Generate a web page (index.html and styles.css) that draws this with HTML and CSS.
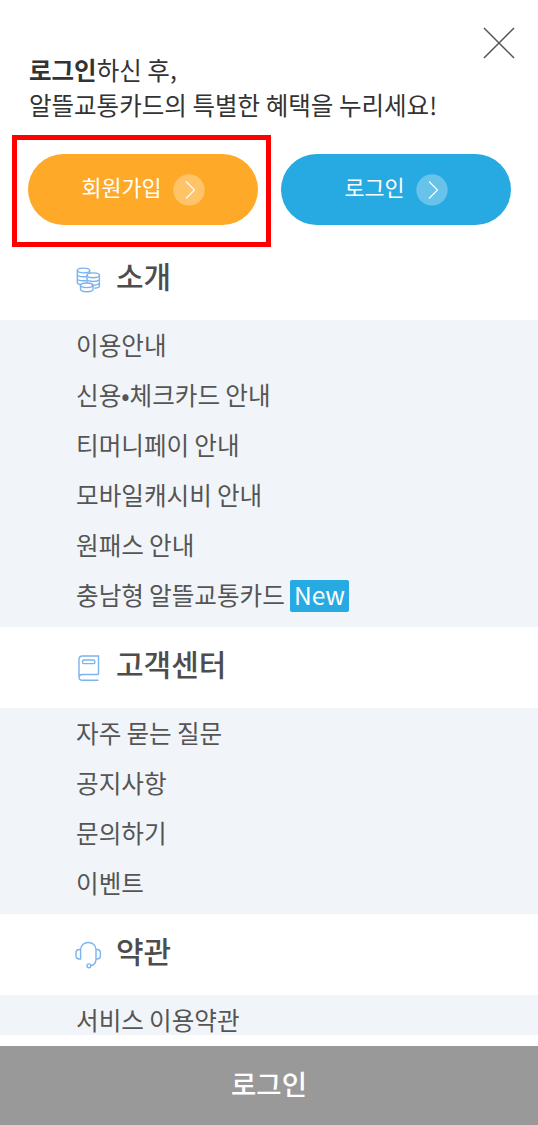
FILE: index.html
```
<!DOCTYPE html>
<html lang="ko">
<head>
    <meta charset="UTF-8">
    <meta name="viewport" content="width=device-width, initial-scale=1.0">
    <title>알뜰교통카드</title>
    <link rel="stylesheet" href="styles.css">
</head>
<body>
    <header class="header">
        <p class="intro"><strong>로그인</strong>하신 후,<br>알뜰교통카드의 특별한 혜택을 누리세요!</p>
        <a class="close">
            <svg width="32" height="32" viewBox="0 0 32 32"><path d="M1 1l30 30M31 1L1 31"/></svg>
        </a>
    </header>
    <div class="member">
        <div class="member-item focus">
            <a class="btn btn-join">
                <span>회원가입</span>
                <svg class="arrow" width="32" height="32" viewBox="0 0 32 32"><circle cx="16" cy="16" r="15.7"/><path d="M13 7.5l8.5 8.5-8.5 8.5"/></svg>
            </a>
        </div>
        <div class="member-item">
            <a class="btn btn-login">
                <span>로그인</span>
                <svg class="arrow" width="32" height="32" viewBox="0 0 32 32"><circle cx="16" cy="16" r="15.7"/><path d="M13 7.5l8.5 8.5-8.5 8.5"/></svg>
            </a>
        </div>
    </div>
    <nav class="menu">
        <h2 class="menu-title menu-title--first">
            <svg class="icon" width="28" height="28" viewBox="0 0 28 28">
                <!-- 동전 -->
                <ellipse cx="9.5" cy="4.500" rx="6.200" ry="2.400"/>
                <path d="M3.300 4.500v12c0 1.200 1.500 2 3.700 2.200M15.700 4.500v3M3.300 8.500c0 1.400 2.700 2.300 6.200 2.300 1.200 0 2.300-.1 3.200-.3M3.300 12.500c0 1.400 2.700 2.300 6.200 2.300h3"/>
                <ellipse cx="19.200" cy="9.300" rx="6.200" ry="2.400"/>
                <path d="M13 9.300V17M25.400 9.300V20c0 1.200-2 2-5 2.200M13 13c0 1.400 2.700 2.400 6.200 2.400s6.200-1 6.200-2.400M17.500 19.200c4.500.2 7.900-.8 7.900-2.400"/>
                <ellipse cx="12.800" cy="19.300" rx="6.300" ry="2.300"/>
                <path d="M6.500 19.300v4c0 1.400 2.800 2.400 6.300 2.400s6.300-1 6.300-2.400v-4"/>
            </svg>
            <span>소개</span>
        </h2>
        <ul class="menu-list">
            <li>이용안내</li>
            <li>신용•체크카드 안내</li>
            <li>티머니페이 안내</li>
            <li>모바일캐시비 안내</li>
            <li>원패스 안내</li>
            <li>충남형 알뜰교통카드 <span class="new">New</span></li>
        </ul>
        <h2 class="menu-title">
            <svg class="icon" width="28" height="28" viewBox="0 0 28 28">
                <!-- 책 -->
                <path d="M24.500 20.500V2H8.500C6.200 2 5 3.200 5 5.200V23c0 2 1.200 3.300 3.500 3.300h16M5 23c0-1.700 1.200-2.500 3.500-2.500h16"/>
                <rect x="8.600" y="6" width="12.200" height="3.600" rx="1.200"/>
            </svg>
            <span>고객센터</span>
        </h2>
        <ul class="menu-list">
            <li>자주 묻는 질문</li>
            <li>공지사항</li>
            <li>문의하기</li>
            <li>이벤트</li>
        </ul>
        <h2 class="menu-title">
            <svg class="icon" width="28" height="28" viewBox="0 0 28 28">
                <!-- 헤드셋 -->
                <path d="M6.600 8.500v9.500H5.400c-2.300 0-3.400-1.500-3.400-3.500v-2.500c0-2 1.100-3.500 3.400-3.500zM22 8.500v9.500h1c2.300 0 3.400-1.500 3.400-3.500v-2.500c0-2-1.100-3.500-3.400-3.500zM6.600 8.500c0-4 3.300-7 7.700-7s7.700 3 7.700 7M22 18c0 4-2 6-5.100 6.700"/>
                <circle cx="14.900" cy="24.800" r="1.900"/>
            </svg>
            <span>약관</span>
        </h2>
        <ul class="menu-list menu-list--cut">
            <li>서비스 이용약관</li>
        </ul>
    </nav>
    <footer class="footer">로그인</footer>
</body>
</html>
```

FILE: styles.css
```
*,*::before,*::after{
    padding: 0;
    margin: 0;
    box-sizing: border-box;
}
body{
    height: 1125px;
    display: flex;
    flex-direction: column;
    background-color: #fff;
    color: #333;
    font-family: "Noto Sans CJK KR", "Noto Sans", sans-serif;
    overflow: hidden;
}
.header{
    height: 135px;
    padding: 27px 23px 0 29px;
    display: flex;
    justify-content: space-between;
}
.intro{
    padding-top: 25px;
    font-size: 24.5px;
    line-height: 35px;
    white-space: nowrap;
    word-spacing: -1.2px;
}
.intro strong{
    font-weight: 700;
}
.close svg{
    display: block;
    fill: none;
    stroke: #555;
    stroke-width: 1.5;
}

.member{
    height: 112px;
    padding-left: 12px;
    display: flex;
}
.member-item{
    width: 259px;
    height: 112px;
    padding: 14px 8px 0 11px;
    border: 5px solid transparent;
}
.member-item.focus{
    border-color: #f00;
}
.member-item + .member-item{
    margin-left: -6px;
}
.btn{
    width: 230px;
    height: 71px;
    display: flex;
    justify-content: center;
    align-items: center;
    gap: 11px;
    border-radius: 36px;
    color: #fff;
    font-size: 21.8px;
    line-height: 32px;
}
.btn span{
    margin-top: -5px;
}
.btn-join{
    background-color: #ffa928;
}
.btn-login{
    background-color: #27a9e1;
}
.arrow{
    fill: rgba(255, 255, 255, .3);
}
.arrow path{
    fill: none;
    stroke: #fff;
    stroke-width: 1.1;
}

.menu-title{
    height: 81px;
    padding: 0 0 5px 74px;
    display: flex;
    align-items: center;
    gap: 14px;
    color: #4d4d4d;
    font-size: 30px;
    font-weight: 500;
    line-height: 40px;
}
.menu-title span{
    margin-top: -4px;
}
.menu-title--first{
    height: 73px;
    padding-bottom: 12px;
}
.menu-title--first span{
    margin-top: -5px;
}
.icon{
    margin-top: 5px;
    fill: none;
    stroke: #7db3ee;
    stroke-width: 1.4;
}
.menu-list{
    padding: 0 0 6px 76px;
    background-color: #f1f5fa;
    list-style: none;
    color: #555;
    font-size: 24.6px;
    word-spacing: -1.7px;
}
.menu-title--first + .menu-list{
    padding-bottom: 7px;
}
.menu-list li{
    height: 50px;
    line-height: 48px;
    white-space: nowrap;
}
.menu-list--cut,
.menu-list--cut li{
    height: 40px;
    padding-bottom: 0;
}
.new{
    display: inline-block;
    height: 32px;
    padding: 0 4px;
    border-radius: 2px;
    background-color: #27a9e1;
    color: #fff;
    letter-spacing: -.1px;
    line-height: 29px;
}

.footer{
    height: 79px;
    margin-top: auto;
    background-color: #999;
    color: #fff;
    font-size: 27.5px;
    font-weight: 500;
    line-height: 74px;
    text-align: center;
}
```
